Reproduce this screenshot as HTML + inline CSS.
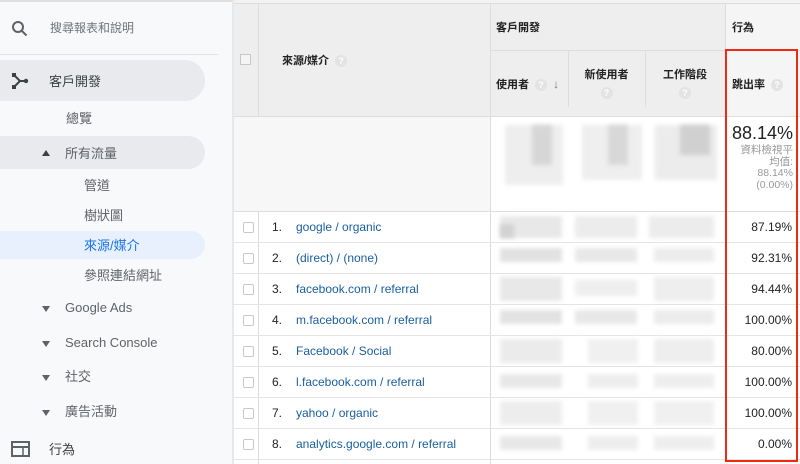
<!DOCTYPE html>
<html><head><meta charset="utf-8"><style>
*{margin:0;padding:0;box-sizing:border-box}
body{width:800px;height:464px;overflow:hidden;background:#fff;font-family:"Liberation Sans","Noto Sans CJK TC",sans-serif;position:relative;color:#333}
.a{position:absolute}
.sb{left:0;top:0;width:232px;height:464px;background:#f8f9fa;border-top:2px solid #e0e0e0}
.nav{position:absolute;font-size:13px;color:#5f6368;white-space:nowrap}
.pill{position:absolute;left:0;width:205px;border-radius:0 20px 20px 0;background:#e8eaed}
.tri{position:absolute;width:0;height:0;border-left:4px solid transparent;border-right:4px solid transparent}
.q{display:inline-block;width:12px;height:12px;border-radius:50%;background:#e3e3e3;color:#fff;font-size:9px;line-height:12px;text-align:center;vertical-align:middle;margin-left:6px}
.hd{font-size:11px;font-weight:bold;color:#222}
.row{position:absolute;left:234px;width:566px;height:31px;border-bottom:1px solid #e4e4e4;font-size:12px}
.cb{position:absolute;left:9px;top:10px;width:11px;height:11px;border:1px solid #c8c8c8;border-radius:2px;background:#fff}
.num{position:absolute;left:38px;top:8px;color:#222}
.lnk{position:absolute;left:62px;top:8px;color:#1a5fa0}
.pct{position:absolute;right:8px;top:8px;color:#222}
.blk{position:absolute;background:#e8e8e8;filter:blur(2px)}
</style></head><body>
<div class="a sb"></div>
<svg class="a" style="left:11px;top:20px" width="18" height="18" viewBox="0 0 18 18"><circle cx="7" cy="7" r="5" fill="none" stroke="#5f6368" stroke-width="2"/><line x1="10.5" y1="10.5" x2="15.5" y2="15.5" stroke="#5f6368" stroke-width="2"/></svg>
<div class="nav" style="left:50px;top:19px;font-size:12px;color:#70757a">搜尋報表和說明</div>
<div class="a" style="left:0;top:54px;width:218px;height:1px;background:#e3e3e3"></div>
<div class="pill" style="top:60px;height:41px"></div>
<svg class="a" style="left:11px;top:72px" width="18" height="18" viewBox="0 0 18 18"><rect x="1" y="1" width="4" height="4" fill="#3c4043"/><rect x="1" y="13" width="4" height="4" fill="#3c4043"/><path d="M3 3 L9 9 L3 15 M9 9 H15" stroke="#3c4043" stroke-width="2" fill="none"/><circle cx="15" cy="9" r="2.2" fill="#3c4043"/></svg>
<div class="nav" style="left:49px;top:71px;color:#3c4043">客戶開發</div>
<div class="nav" style="left:66px;top:108px">總覽</div>
<div class="pill" style="top:136px;height:33px"></div>
<div class="tri" style="left:42px;top:150px;border-bottom:6px solid #3c4043"></div>
<div class="nav" style="left:65px;top:143px">所有流量</div>
<div class="nav" style="left:84px;top:175px">管道</div>
<div class="nav" style="left:84px;top:205px">樹狀圖</div>
<div class="pill" style="top:231px;height:28px;background:#e8f0fe"></div>
<div class="nav" style="left:84px;top:235px;color:#1a73e8">來源/媒介</div>
<div class="nav" style="left:84px;top:265px">參照連結網址</div>
<div class="tri" style="left:42px;top:306px;border-top:6px solid #5f6368"></div>
<div class="nav" style="left:65px;top:300px">Google Ads</div>
<div class="tri" style="left:42px;top:341px;border-top:6px solid #5f6368"></div>
<div class="nav" style="left:65px;top:335px">Search Console</div>
<div class="tri" style="left:42px;top:375px;border-top:6px solid #5f6368"></div>
<div class="nav" style="left:65px;top:366px">社交</div>
<div class="tri" style="left:42px;top:410px;border-top:6px solid #5f6368"></div>
<div class="nav" style="left:65px;top:401px">廣告活動</div>
<svg class="a" style="left:11px;top:441px" width="19" height="16" viewBox="0 0 19 16"><rect x="1" y="1" width="17" height="14" fill="none" stroke="#5f6368" stroke-width="2"/><line x1="1" y1="6" x2="18" y2="6" stroke="#5f6368" stroke-width="2"/><line x1="12" y1="6" x2="12" y2="15" stroke="#5f6368" stroke-width="1.5"/></svg>
<div class="nav" style="left:49px;top:439px;color:#3c4043">行為</div>
<div class="a" style="left:232px;top:0;width:2px;height:464px;background:#e8e8e8"></div>
<div class="a" style="left:234px;top:0;width:566px;height:4px;background:#f2f2f2;border-bottom:1px solid #ddd"></div>
<div class="a" style="left:234px;top:4px;width:491px;height:112px;background:#eeeeee"></div>
<div class="a" style="left:725px;top:4px;width:75px;height:112px;background:#f5f5f5"></div>
<div class="a" style="left:258px;top:4px;width:1px;height:460px;background:#ddd"></div>
<div class="a" style="left:490px;top:4px;width:1px;height:460px;background:#ddd"></div>
<div class="a" style="left:725px;top:4px;width:1px;height:112px;background:#ddd"></div>
<div class="a" style="left:490px;top:50px;width:310px;height:1px;background:#ddd"></div>
<div class="a" style="left:568px;top:50px;width:1px;height:57px;background:#ddd"></div>
<div class="a" style="left:645px;top:50px;width:1px;height:57px;background:#ddd"></div>
<div class="a" style="left:234px;top:116px;width:566px;height:1px;background:#ddd"></div>
<div class="a" style="left:240px;top:54px;width:11px;height:11px;border:1px solid #c8c8c8;background:#f5f5f5"></div>
<div class="a hd" style="left:282px;top:52px">來源/媒介<span class="q">?</span></div>
<div class="a hd" style="left:496px;top:19px">客戶開發</div>
<div class="a hd" style="left:732px;top:19px">行為</div>
<div class="a hd" style="left:496px;top:76px">使用者<span class="q">?</span> <span style="color:#777;font-size:12px;margin-left:3px">↓</span></div>
<div class="a hd" style="left:568px;top:66px;width:77px;text-align:center">新使用者<br><span class="q" style="margin:5px 0 0">?</span></div>
<div class="a hd" style="left:645px;top:66px;width:80px;text-align:center">工作階段<br><span class="q" style="margin:5px 0 0">?</span></div>
<div class="a hd" style="left:732px;top:76px">跳出率<span class="q">?</span></div>
<div class="a" style="left:234px;top:117px;width:256px;height:95px;background:#f7f7f7"></div>
<div class="a" style="left:234px;top:211px;width:566px;height:1px;background:#ddd"></div>
<div class="blk" style="left:505px;top:125px;width:58px;height:60px;background:#eeeeee"></div>
<div class="blk" style="left:532px;top:125px;width:20px;height:40px;background:#d6d6d6"></div>
<div class="blk" style="left:582px;top:125px;width:60px;height:55px;background:#efefef"></div>
<div class="blk" style="left:608px;top:125px;width:20px;height:40px;background:#d8d8d8"></div>
<div class="blk" style="left:655px;top:125px;width:62px;height:55px;background:#ececec"></div>
<div class="blk" style="left:680px;top:125px;width:30px;height:30px;background:#d0d0d0"></div>
<div class="a" style="left:732px;top:123px;font-size:18px;color:#222">88.14%</div>
<div class="a" style="left:726px;top:145px;width:67px;text-align:right;font-size:10.5px;color:#999;line-height:11.5px">資料檢視平<br>均值:<br>88.14%<br>(0.00%)</div>
<div class="row" style="top:212px"><div class="cb"></div><div class="num">1.</div><div class="lnk">google / organic</div><div class="blk" style="left:266px;top:4px;width:62px;height:22px"></div><div class="blk" style="left:266px;top:12px;width:14px;height:14px;background:#d2d2d2"></div><div class="blk" style="left:341px;top:4px;width:62px;height:22px;background:#ececec"></div><div class="blk" style="left:415px;top:4px;width:65px;height:22px;background:#ececec"></div><div class="pct">87.19%</div></div>
<div class="row" style="top:243px"><div class="cb"></div><div class="num">2.</div><div class="lnk">(direct) / (none)</div><div class="blk" style="left:266px;top:5px;width:62px;height:14px;background:#e2e2e2"></div><div class="blk" style="left:341px;top:5px;width:62px;height:14px"></div><div class="blk" style="left:420px;top:5px;width:60px;height:14px;background:#ececec"></div><div class="pct">92.31%</div></div>
<div class="row" style="top:274px"><div class="cb"></div><div class="num">3.</div><div class="lnk">facebook.com / referral</div><div class="blk" style="left:266px;top:3px;width:62px;height:24px"></div><div class="blk" style="left:341px;top:6px;width:62px;height:16px;background:#eeeeee"></div><div class="blk" style="left:420px;top:3px;width:60px;height:24px;background:#eeeeee"></div><div class="pct">94.44%</div></div>
<div class="row" style="top:305px"><div class="cb"></div><div class="num">4.</div><div class="lnk">m.facebook.com / referral</div><div class="blk" style="left:266px;top:5px;width:62px;height:14px;background:#e2e2e2"></div><div class="blk" style="left:341px;top:5px;width:62px;height:14px"></div><div class="blk" style="left:420px;top:5px;width:60px;height:14px;background:#ececec"></div><div class="pct">100.00%</div></div>
<div class="row" style="top:336px"><div class="cb"></div><div class="num">5.</div><div class="lnk">Facebook / Social</div><div class="blk" style="left:266px;top:3px;width:62px;height:24px;background:#ebebeb"></div><div class="blk" style="left:354px;top:3px;width:50px;height:24px;background:#f0f0f0"></div><div class="blk" style="left:420px;top:3px;width:60px;height:24px;background:#eeeeee"></div><div class="pct">80.00%</div></div>
<div class="row" style="top:367px"><div class="cb"></div><div class="num">6.</div><div class="lnk">l.facebook.com / referral</div><div class="blk" style="left:266px;top:7px;width:62px;height:14px"></div><div class="blk" style="left:354px;top:7px;width:50px;height:14px;background:#ededed"></div><div class="blk" style="left:420px;top:7px;width:60px;height:14px;background:#eeeeee"></div><div class="pct">100.00%</div></div>
<div class="row" style="top:398px"><div class="cb"></div><div class="num">7.</div><div class="lnk">yahoo / organic</div><div class="blk" style="left:266px;top:3px;width:62px;height:24px;background:#ededed"></div><div class="blk" style="left:354px;top:3px;width:50px;height:24px;background:#f0f0f0"></div><div class="blk" style="left:420px;top:3px;width:60px;height:24px;background:#f0f0f0"></div><div class="pct">100.00%</div></div>
<div class="row" style="top:429px"><div class="cb"></div><div class="num">8.</div><div class="lnk">analytics.google.com / referral</div><div class="blk" style="left:266px;top:7px;width:62px;height:14px"></div><div class="blk" style="left:354px;top:7px;width:50px;height:14px;background:#ededed"></div><div class="blk" style="left:420px;top:7px;width:60px;height:14px;background:#eeeeee"></div><div class="pct">0.00%</div></div>
<div class="a" style="left:725px;top:49px;width:73px;height:413px;border:2px solid #f02a12"></div>
</body></html>
